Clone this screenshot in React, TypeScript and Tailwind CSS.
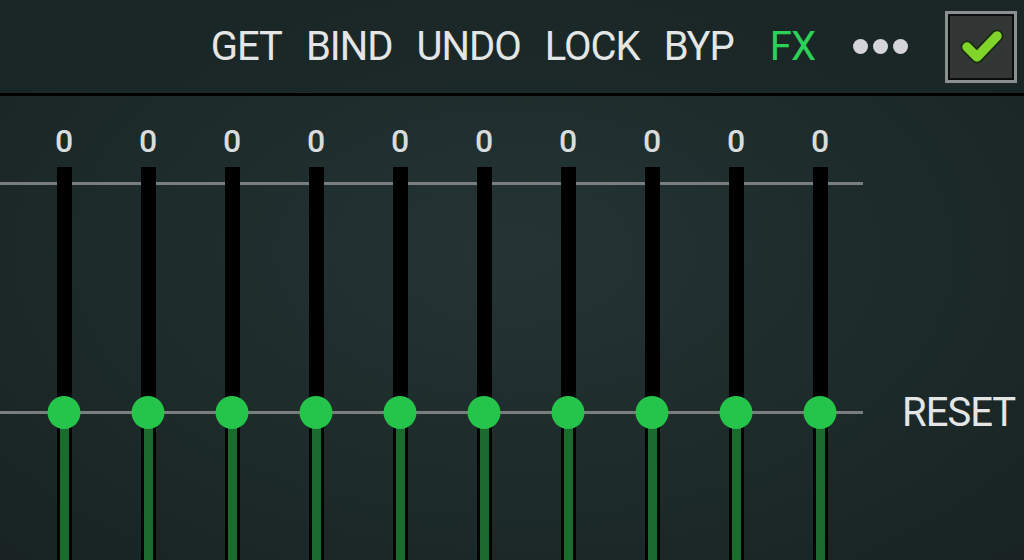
import React from "react";

const bands = Array.from({ length: 10 }, () => 0);

const Slider: React.FC<{ value: number }> = ({ value }) => {
    return <div className="flex w-[84px] flex-col items-center">
        <span className="mt-[29px] text-[32px] font-medium leading-none text-[#d9dcdc]">{value}</span>
        <div className="relative mt-[10px] w-[15px] flex-1 bg-black">
            <div className="absolute left-[3px] right-[3px] top-[245px] bottom-0 bg-[#1b6a2e]" />
            <div className="absolute left-1/2 top-[229px] size-[33px] -translate-x-1/2 rounded-full bg-[#25c54b]" />
        </div>
    </div>
}

const CheckBox: React.FC = () => {
    return <div className="flex size-[72px] items-center justify-center border-[3px] border-[#8c8f8f] bg-[#323736] shadow-[inset_0_0_0_2px_#0b0d0d]">
        <svg width="48" height="40" viewBox="0 0 48 40">
            <path d="M10 20 L20 30 L40 9" fill="none" stroke="#1a2a10" strokeWidth="13" strokeLinecap="round" strokeLinejoin="round" />
            <path d="M10 20 L20 30 L40 9" fill="none" stroke="#80d42a" strokeWidth="9.5" strokeLinecap="round" strokeLinejoin="round" />
        </svg>
    </div>
}

const App: React.FC = () => {
    return <div className="flex h-[560px] w-[1024px] flex-col overflow-hidden bg-[radial-gradient(ellipse_at_50%_45%,#243434_0%,#1c2a29_60%,#182322_100%)] font-['Roboto',sans-serif] text-[#e4e6e6]">
        <header className="flex h-[96px] shrink-0 items-center justify-end border-b-[3px] border-black bg-[#1a2726]/60 pr-[7px] text-[40px] leading-none tracking-[-1px]">
            <span>GET</span>
            <span className="ml-[24px]">BIND</span>
            <span className="ml-[24px]">UNDO</span>
            <span className="ml-[24px]">LOCK</span>
            <span className="ml-[24px]">BYP</span>
            <span className="ml-[36px] text-[#2ed158]">FX</span>
            <div className="ml-[38px] flex gap-[5px]">
                <span className="size-[15px] rounded-full bg-[#d4d4da]" />
                <span className="size-[15px] rounded-full bg-[#d4d4da]" />
                <span className="size-[15px] rounded-full bg-[#d4d4da]" />
            </div>
            <div className="ml-[37px]">
                <CheckBox />
            </div>
        </header>
        <main className="flex flex-1">
            <div className="relative flex w-[863px] pl-[22px]">
                <div className="absolute left-0 right-0 top-[86px] h-[3px] bg-[#7b7e7e]" />
                <div className="absolute left-0 right-0 top-[315px] h-[3px] bg-[#7b7e7e]" />
                {bands.map((v, i) => <Slider key={i} value={v} />)}
            </div>
            <div className="pl-[39px] pt-[297px] text-[40px] leading-none tracking-[-1px]">RESET</div>
        </main>
    </div>
}

export default App
